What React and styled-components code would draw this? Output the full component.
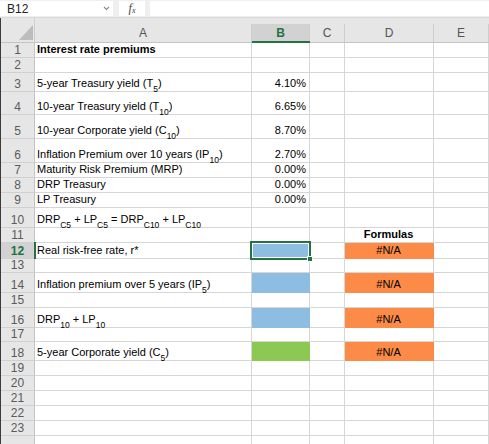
import React from 'react';
import styled, { createGlobalStyle, css } from 'styled-components';

const Global = createGlobalStyle`
  html, body { margin: 0; padding: 0; background: #fff; }
  body { font-family: "Liberation Sans", Arial, sans-serif; }
`;

const GREEN = '#217346';
const BLUE = '#8ebde2';
const ORANGE = '#fb8b47';
const LIME = '#8cc852';
const GRID = '#d6d6d6';

const Window = styled.div`
  width: 489px;
  height: 444px;
  overflow: hidden;
  display: flex;
  flex-direction: column;
  background: #fff;
`;

const FormulaBar = styled.div`
  height: 23px;
  box-sizing: border-box;
  display: flex;
  align-items: stretch;
  padding: 1px 0 1px 0;
  gap: 5px;
  background: #efefef;
  border-bottom: 1px solid #d9d9d9;
`;

const NameBox = styled.div`
  width: 113px;
  box-sizing: border-box;
  background: #fff;
  display: flex;
  align-items: center;
  justify-content: space-between;
  padding: 0 3px 0 7px;
  font-size: 12px;
  color: #222;
  margin-right: 1px;
`;

const FxBox = styled.div`
  width: 26px;
  background: #fff;
  display: flex;
  align-items: center;
  justify-content: center;
  font-family: "Liberation Serif", "DejaVu Serif", serif;
  font-style: italic;
  font-size: 12px;
  color: #444;
  small { font-size: 8px; margin-top: 3px; }
`;

const InputBox = styled.div`
  flex: 1;
  background: #fff;
`;

const Sheet = styled.div`
  flex: 1;
  display: grid;
  grid-template-columns: 34px 217px 58px 35px 89px 1fr;
  grid-template-rows: ${p => p.$rows};
  border-left: 1px solid #3c3c3c;
  font-size: 11px;
  color: #000;
`;

const Corner = styled.div`
  background: #e6e6e6;
  box-sizing: border-box;
  border-right: 1px solid #cfcfcf;
  border-bottom: 1px solid #c4c4c4;
  display: flex;
  align-items: flex-end;
  justify-content: flex-end;
  padding: 0 1px 2px 0;
`;

const ColHeader = styled.div`
  background: #e6e6e6;
  box-sizing: border-box;
  padding-top: 6px;
  display: flex;
  border-bottom: ${p => (p.$active ? `2px solid ${GREEN}` : '1px solid #c4c4c4')};
`;

const ColLabel = styled.div`
  flex: 1;
  box-sizing: border-box;
  border-right: 1px solid #cdcdcd;
  display: flex;
  align-items: center;
  justify-content: center;
  font-size: 12px;
  color: #555;
  ${p => p.$active && css`
    background: #d2d2d2;
    color: ${GREEN};
    font-weight: bold;
  `}
`;

const RowHeader = styled.div`
  position: relative;
  background: #e6e6e6;
  box-sizing: border-box;
  border-right: 1px solid #c4c4c4;
  border-bottom: 1px solid #d0d0d0;
  display: flex;
  align-items: flex-end;
  justify-content: center;
  font-size: 12px;
  line-height: 13px;
  color: #5b5b5b;
  ${p => p.$active && css`
    background: #d2d2d2;
    color: ${GREEN};
    font-weight: bold;
    border-right-color: ${GREEN};
    z-index: 1;
    &::after {
      content: '';
      position: absolute;
      top: -1px;
      bottom: -1px;
      right: -2px;
      width: 2px;
      background: ${GREEN};
    }
  `}
`;

const Cell = styled.div`
  position: relative;
  box-sizing: border-box;
  border-right: 1px solid ${p => p.$fill || GRID};
  border-bottom: 1px solid ${p => p.$fill || GRID};
  background: ${p => p.$fill || '#fff'};
  display: flex;
  align-items: flex-end;
  justify-content: ${p => (p.$align === 'right' ? 'flex-end' : p.$align === 'center' ? 'center' : 'flex-start')};
  padding: 0 3px 2px 2px;
  font-size: 11px;
  line-height: 12px;
  white-space: pre;
  font-weight: ${p => (p.$bold ? 'bold' : 'normal')};
`;

const Sub = styled.span`
  font-size: 8.5px;
  line-height: 0;
  vertical-align: -3px;
`;

const Selection = styled.div`
  position: absolute;
  left: -2px;
  top: -2px;
  right: -2px;
  bottom: -2px;
  border: 2px solid ${GREEN};
  box-shadow: inset 0 0 0 1px #fff;
  z-index: 2;
  pointer-events: none;
`;

const Handle = styled.div`
  position: absolute;
  right: -4px;
  bottom: -4px;
  width: 4px;
  height: 4px;
  background: ${GREEN};
  border: 1px solid #fff;
`;

const T = ({ children }) => <>{children}</>;

const rows = [
  { h: 15, a: <b>Interest rate premiums</b> },
  { h: 15 },
  { h: 19, a: <T>5-year Treasury yield (T<Sub>5</Sub>)</T>, b: '4.10%' },
  { h: 23, a: <T>10-year Treasury yield (T<Sub>10</Sub>)</T>, b: '6.65%' },
  { h: 24, a: <T>10-year Corporate yield (C<Sub>10</Sub>)</T>, b: '8.70%' },
  { h: 24, a: <T>Inflation Premium over 10 years (IP<Sub>10</Sub>)</T>, b: '2.70%' },
  { h: 15, a: 'Maturity Risk Premium (MRP)', b: '0.00%' },
  { h: 15, a: 'DRP Treasury', b: '0.00%' },
  { h: 15, a: 'LP Treasury', b: '0.00%' },
  { h: 20, a: <T>DRP<Sub>C5</Sub>{' + LP'}<Sub>C5</Sub>{' = DRP'}<Sub>C10</Sub>{' + LP'}<Sub>C10</Sub></T> },
  { h: 15, d: 'Formulas', dBold: true },
  { h: 16, a: 'Real risk-free rate, r*', bFill: BLUE, selected: true, d: '#N/A', dFill: ORANGE },
  { h: 14 },
  { h: 20, a: <T>Inflation premium over 5 years (IP<Sub>5</Sub>)</T>, bFill: BLUE, d: '#N/A', dFill: ORANGE },
  { h: 15 },
  { h: 20, a: <T>DRP<Sub>10</Sub>{' + LP'}<Sub>10</Sub></T>, bFill: BLUE, d: '#N/A', dFill: ORANGE },
  { h: 14 },
  { h: 19, a: <T>5-year Corporate yield (C<Sub>5</Sub>)</T>, bFill: LIME, d: '#N/A', dFill: ORANGE },
  { h: 15 }, { h: 15 }, { h: 15 }, { h: 15 }, { h: 15 },
  { h: 15, hidden: true },
];

const columns = ['A', 'B', 'C', 'D', 'E'];

export default function App() {
  const template = ['25px', ...rows.map(r => `${r.h}px`)].join(' ');
  return (
    <Window>
      <Global />
      <FormulaBar>
        <NameBox>
          <span>B12</span>
          <svg width="7" height="5" viewBox="0 0 7 5">
            <path d="M1 1 L3.5 3.5 L6 1" fill="none" stroke="#8a8a8a" strokeWidth="1.1" />
          </svg>
        </NameBox>
        <FxBox>f<small>x</small></FxBox>
        <InputBox />
      </FormulaBar>
      <Sheet $rows={template}>
        <Corner>
          <svg width="14" height="15" viewBox="0 0 14 15">
            <polygon points="14,0 14,15 0,15" fill="#bdbdbd" />
          </svg>
        </Corner>
        {columns.map(c => (
          <ColHeader key={c} $active={c === 'B'}>
            <ColLabel $active={c === 'B'}>{c}</ColLabel>
          </ColHeader>
        ))}
        {rows.map((r, i) => (
          <React.Fragment key={i}>
            <RowHeader $active={r.selected}>{r.hidden ? '' : i + 1}</RowHeader>
            <Cell>{r.a}</Cell>
            <Cell $align="right" $fill={r.bFill}>
              {r.b}
              {r.selected && (
                <Selection>
                  <Handle />
                </Selection>
              )}
            </Cell>
            <Cell />
            <Cell $align="center" $fill={r.dFill} $bold={r.dBold}>{r.d}</Cell>
            <Cell />
          </React.Fragment>
        ))}
      </Sheet>
    </Window>
  );
}
